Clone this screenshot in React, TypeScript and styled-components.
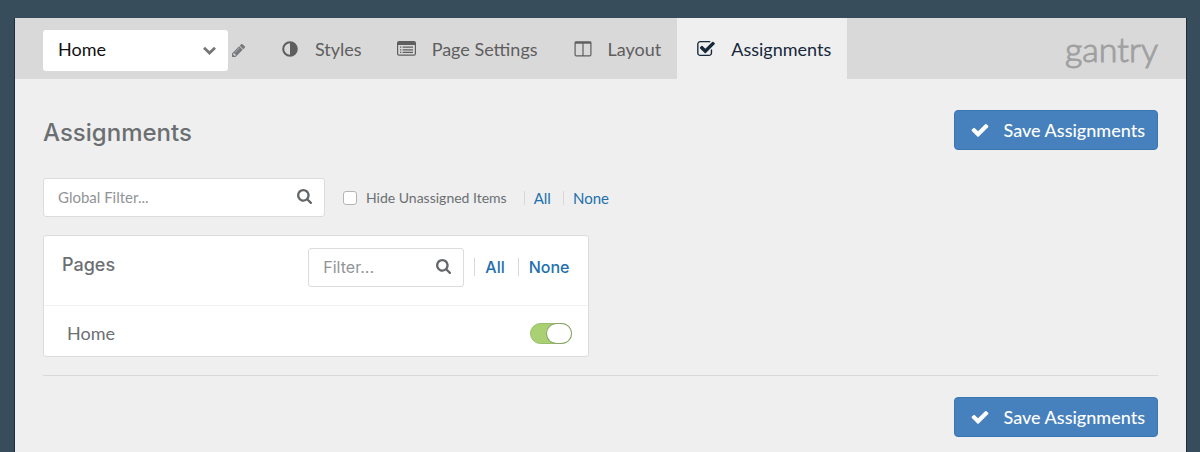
import React, { useState } from "react";
import styled, { createGlobalStyle, css } from "styled-components";

const GlobalStyle = createGlobalStyle`
  *, *::before, *::after { box-sizing: border-box; }
  body {
    margin: 0;
    background: #384d5b;
    color: #6b6f72;
    font-family: Lato, "Liberation Sans", sans-serif;
    font-size: 18px;
    line-height: 24px;
  }
  button, input, select { font: inherit; color: inherit; }
`;

const headingFont = css`
  font-family: Inter, "Open Sans", sans-serif;
`;

const Page = styled.div`
  display: flex;
  min-height: 100vh;
  padding: 18px 13px 0 14px;
`;

const Panel = styled.div`
  flex: 1;
  min-width: 0;
  background: #efefef;
  border: solid #1b2f40;
  border-width: 0 1px;
`;

const TopBar = styled.header`
  display: flex;
  align-items: stretch;
  min-height: 61px;
  padding: 0 28px;
  background: #d9d9d9;
`;

const OutlinePicker = styled.div`
  display: flex;
  align-items: center;
  gap: 4px;
  margin-right: 16px;
  padding-top: 4px;
`;

const SelectWrap = styled.div`
  display: grid;
  align-items: center;
  width: 185px;

  > * { grid-area: 1 / 1; }
  > svg { justify-self: end; margin-right: 12px; pointer-events: none; }
`;

const Select = styled.select`
  width: 100%;
  height: 41px;
  padding: 0 36px 4px 15px;
  border: 0;
  border-radius: 3px;
  background: #fff;
  color: #111;
  appearance: none;
`;

const PlainButton = styled.button`
  display: flex;
  padding: 0;
  border: 0;
  background: none;
  color: #777a7c;
  cursor: pointer;
`;

const Tabs = styled.nav`
  display: flex;
`;

const Tab = styled.a<{ $active?: boolean }>`
  display: flex;
  align-items: center;
  gap: 15px;
  padding: 0 16px 0 19px;
  color: ${(p) => (p.$active ? "#16283a" : "#5e5e5e")};
  background: ${(p) => (p.$active ? "#efefef" : "transparent")};
  text-decoration: none;
  white-space: nowrap;
`;

const TabIcon = styled.span`
  display: flex;
  justify-content: center;
  width: 20px;
`;

const Brand = styled.a`
  align-self: center;
  margin-left: auto;
  color: #a0a0a0;
  font-size: 34px;
  font-weight: 300;
  line-height: 40px;
  text-decoration: none;
  -webkit-text-stroke: 1px #a0a0a0;
`;

const Content = styled.main`
  padding: 31px 28px 15px;
`;

const TitleRow = styled.div`
  display: flex;
  align-items: center;
  justify-content: space-between;
`;

const Title = styled.h1`
  ${headingFont}
  margin: 6px 0 0;
  font-size: 24px;
  font-weight: 500;
  line-height: 32px;
`;

const SaveButton = styled.button`
  display: flex;
  align-items: center;
  gap: 15px;
  height: 40px;
  padding: 0 12px 0 16px;
  border: 1px solid #3b76b4;
  border-radius: 4px;
  background: #4680bd;
  color: #fff;
  font-weight: 500;
  cursor: pointer;
`;

const FilterRow = styled.div`
  display: flex;
  align-items: center;
  margin: 28px 0 18px;
  font-size: 15px;
`;

const SearchBox = styled.label<{ $width: number }>`
  display: flex;
  align-items: center;
  width: ${(p) => p.$width}px;
  height: 39px;
  padding: 0 12px 2px 14px;
  border: 1px solid #dcdcdc;
  border-radius: 3px;
  background: #fff;
`;

const SearchInput = styled.input`
  flex: 1;
  min-width: 0;
  padding: 0;
  border: 0;
  outline: 0;
  background: none;

  &::placeholder { color: #919496; opacity: 1; }
`;

const CheckLabel = styled.label`
  display: flex;
  align-items: center;
  gap: 9px;
  margin: 0 17px 0 18px;
  font-size: 14px;
`;

const Checkbox = styled.input`
  width: 14px;
  height: 14px;
  margin: 0;
  border: 1px solid #b5b5b5;
  border-radius: 3px;
  background: #fff;
  appearance: none;

  &:checked { background: #4680bd; }
`;

const Links = styled.div`
  display: flex;
  align-items: center;
  gap: 12px;
`;

const PickLink = styled.a`
  display: flex;
  align-items: center;
  gap: 9px;
  color: #2270ad;
  text-decoration: none;

  &::before {
    content: "";
    width: 1px;
    height: 14px;
    background: #d8d8d8;
  }
`;

const Cards = styled.div`
  display: grid;
  grid-template-columns: repeat(2, minmax(0, 1fr));
  gap: 24px;
`;

const Card = styled.section`
  border: 1px solid #dcdcdc;
  border-radius: 3px;
  background: #fff;
`;

const CardHeader = styled.div`
  ${headingFont}
  display: flex;
  align-items: flex-start;
  height: 70px;
  padding: 12px 18px 0;
  border-bottom: 1px solid #f0f0f0;
  font-size: 16px;
`;

const CardTitle = styled.h2`
  flex: 1;
  margin: 5px 0 0;
  font-size: 18px;
  font-weight: 500;
  line-height: 24px;
`;

const CardLinks = styled(Links)`
  gap: 13px;
  height: 38px;
  margin-left: 10px;
  font-weight: 500;

  ${PickLink} { gap: 10px; }
  ${PickLink}::before { height: 18px; }
`;

const ItemRow = styled.label`
  display: flex;
  align-items: center;
  justify-content: space-between;
  height: 50px;
  padding: 4px 16px 0 23px;
`;

const Toggle = styled.input`
  display: flex;
  width: 42px;
  height: 21px;
  margin: 0;
  border: 1px solid #b5b5b5;
  border-radius: 11px;
  background: #ddd;
  appearance: none;
  cursor: pointer;

  &::before {
    content: "";
    width: 24px;
    height: 19px;
    border-radius: 10px;
    background: #fff;
    box-shadow: 0 0 0 1px #8aa566;
  }

  &:checked {
    justify-content: flex-end;
    border-color: #98bd6c;
    background: #a9d174;
  }
`;

const Divider = styled.hr`
  margin: 18px 0 21px;
  border: 0;
  border-top: 1px solid #d9d9d9;
`;

const Actions = styled.div`
  display: flex;
  justify-content: flex-end;
`;

type IconProps = { size?: number };

const ChevronIcon = () => (
  <svg width="13" height="9" viewBox="0 0 13 9" aria-hidden="true">
    <path d="M1 1.700 6.500 7l5.500-5.300" fill="none" stroke="#777" strokeWidth="2.800" />
  </svg>
);

const PencilIcon = () => (
  <svg width="13" height="13" viewBox="128 149 1515 1515" fill="currentColor" aria-hidden="true">
    <path d="M491 1536l91-91-235-235-91 91v107h128v128h107zm523-928q0-22-22-22-10 0-17 7l-542 542q-7 7-7 17 0 22 22 22 10 0 17-7l542-542q7-7 7-17zm-54-192l416 416-832 832h-416v-416zm683 96q0 53-37 90l-166 166-416-416 166-165q36-38 90-38 53 0 91 38l235 234q37 39 37 91z" />
  </svg>
);

const ContrastIcon = () => (
  <svg width="16" height="16" viewBox="0 0 16 16" aria-hidden="true">
    <circle cx="8" cy="8" r="6.8" fill="none" stroke="currentColor" strokeWidth="2" />
    <path d="M8 1.5a6.5 6.5 0 0 1 0 13z" fill="currentColor" />
  </svg>
);

const ListIcon = () => (
  <svg width="19" height="15" viewBox="0 0 19 15" fill="currentColor" aria-hidden="true">
    <rect x=".6" y=".6" width="17.8" height="13.6" rx="1.5" fill="none" stroke="currentColor" strokeWidth="1.2" />
    <path d="M1 1h17v3H1zM3 5.6h1.3v1.2H3zM3 8.2h1.3v1.2H3zM3 10.8h1.3V12H3zM5.6 5.6H16v1.2H5.6zM5.6 8.2H16v1.2H5.6zM5.6 10.8H16V12H5.6z" />
  </svg>
);

const ColumnsIcon = () => (
  <svg width="18" height="16" viewBox="0 0 18 16" aria-hidden="true">
    <rect x="1.1" y="1.1" width="15.8" height="13.8" rx="1.2" fill="none" stroke="currentColor" strokeWidth="1.2" />
    <path d="M9 1v14" stroke="currentColor" strokeWidth="1.2" />
    <path d="M.8 1.6h16.4" stroke="currentColor" strokeWidth="2.2" />
  </svg>
);

const CheckSquareIcon = () => (
  <svg width="18" height="15" viewBox="0 128 1664 1408" fill="currentColor" aria-hidden="true">
    <path d="M1408 930v318q0 119-84.500 203.500t-203.500 84.500h-832q-119 0-203.500-84.500t-84.500-203.500v-832q0-119 84.500-203.500t203.500-84.500h832q63 0 117 25 15 7 18 23 3 17-9 29l-49 49q-10 10-23 10-3 0-9-2-23-6-45-6h-832q-66 0-113 47t-47 113v832q0 66 47 113t113 47h832q66 0 113-47t47-113v-254q0-13 9-22l64-64q10-10 23-10 6 0 12 3 20 8 20 29zm231-489l-814 814q-24 24-57 24t-57-24l-430-430q-24-24-24-57t24-57l110-110q24-24 57-24t57 24l263 263 647-647q24-24 57-24t57 24l110 110q24 24 24 57t-24 57z" />
  </svg>
);

const CheckIcon = ({ size = 18 }: IconProps) => (
  <svg width={size} height={size} viewBox="64 64 1664 1664" fill="currentColor" aria-hidden="true">
    <path d="M1671 566q0 40-28 68l-724 724-136 136q-28 28-68 28t-68-28l-136-136-362-362q-28-28-28-68t28-68l136-136q28-28 68-28t68 28l294 295 656-657q28-28 68-28t68 28l136 136q28 28 28 68z" />
  </svg>
);

const SearchIcon = ({ size = 15 }: IconProps) => (
  <svg width={size} height={size} viewBox="64 128 1664 1664" fill="#63676a" aria-hidden="true">
    <path d="M1216 832q0-185-131.500-316.500t-316.500-131.500-316.500 131.500-131.500 316.500 131.500 316.500 316.500 131.500 316.500-131.500 131.500-316.500zm512 832q0 52-38 90t-90 38q-54 0-90-38l-343-342q-179 124-399 124-143 0-273.500-55.500t-225-150-150-225-55.500-273.500 55.500-273.500 150-225 225-150 273.500-55.500 273.500 55.500 225 150 150 225 55.500 273.500q0 220-124 399l343 343q37 37 37 90z" />
  </svg>
);

const tabs = [
  { label: "Styles", icon: <ContrastIcon /> },
  { label: "Page Settings", icon: <ListIcon /> },
  { label: "Layout", icon: <ColumnsIcon /> },
  { label: "Assignments", icon: <CheckSquareIcon />, active: true },
];

const Search = ({ label, width }: { label: string; width: number }) => (
  <SearchBox $width={width}>
    <SearchInput type="text" placeholder={label} aria-label={label} />
    <SearchIcon />
  </SearchBox>
);

const Save = () => (
  <SaveButton type="button">
    <CheckIcon />
    Save Assignments
  </SaveButton>
);

export default function App() {
  const [hide, setHide] = useState(false);
  const [home, setHome] = useState(true);

  return (
    <Page>
      <GlobalStyle />
      <Panel>
        <TopBar>
          <OutlinePicker>
            <SelectWrap>
              <Select aria-label="Outline">
                <option>Home</option>
              </Select>
              <ChevronIcon />
            </SelectWrap>
            <PlainButton type="button" aria-label="Rename outline">
              <PencilIcon />
            </PlainButton>
          </OutlinePicker>
          <Tabs>
            {tabs.map((t) => (
              <Tab key={t.label} href="#" $active={t.active} aria-current={t.active ? "page" : undefined}>
                <TabIcon>{t.icon}</TabIcon>
                {t.label}
              </Tab>
            ))}
          </Tabs>
          <Brand href="#">gantry</Brand>
        </TopBar>

        <Content>
          <TitleRow>
            <Title>Assignments</Title>
            <Save />
          </TitleRow>

          <FilterRow>
            <Search label="Global Filter..." width={282} />
            <CheckLabel>
              <Checkbox type="checkbox" checked={hide} onChange={(e) => setHide(e.target.checked)} />
              Hide Unassigned Items
            </CheckLabel>
            <Links>
              <PickLink href="#">All</PickLink>
              <PickLink href="#">None</PickLink>
            </Links>
          </FilterRow>

          <Cards>
            <Card>
              <CardHeader>
                <CardTitle>Pages</CardTitle>
                <Search label="Filter..." width={156} />
                <CardLinks>
                  <PickLink href="#">All</PickLink>
                  <PickLink href="#">None</PickLink>
                </CardLinks>
              </CardHeader>
              <ItemRow>
                Home
                <Toggle type="checkbox" role="switch" checked={home} onChange={(e) => setHome(e.target.checked)} />
              </ItemRow>
            </Card>
          </Cards>

          <Divider />
          <Actions>
            <Save />
          </Actions>
        </Content>
      </Panel>
    </Page>
  );
}
